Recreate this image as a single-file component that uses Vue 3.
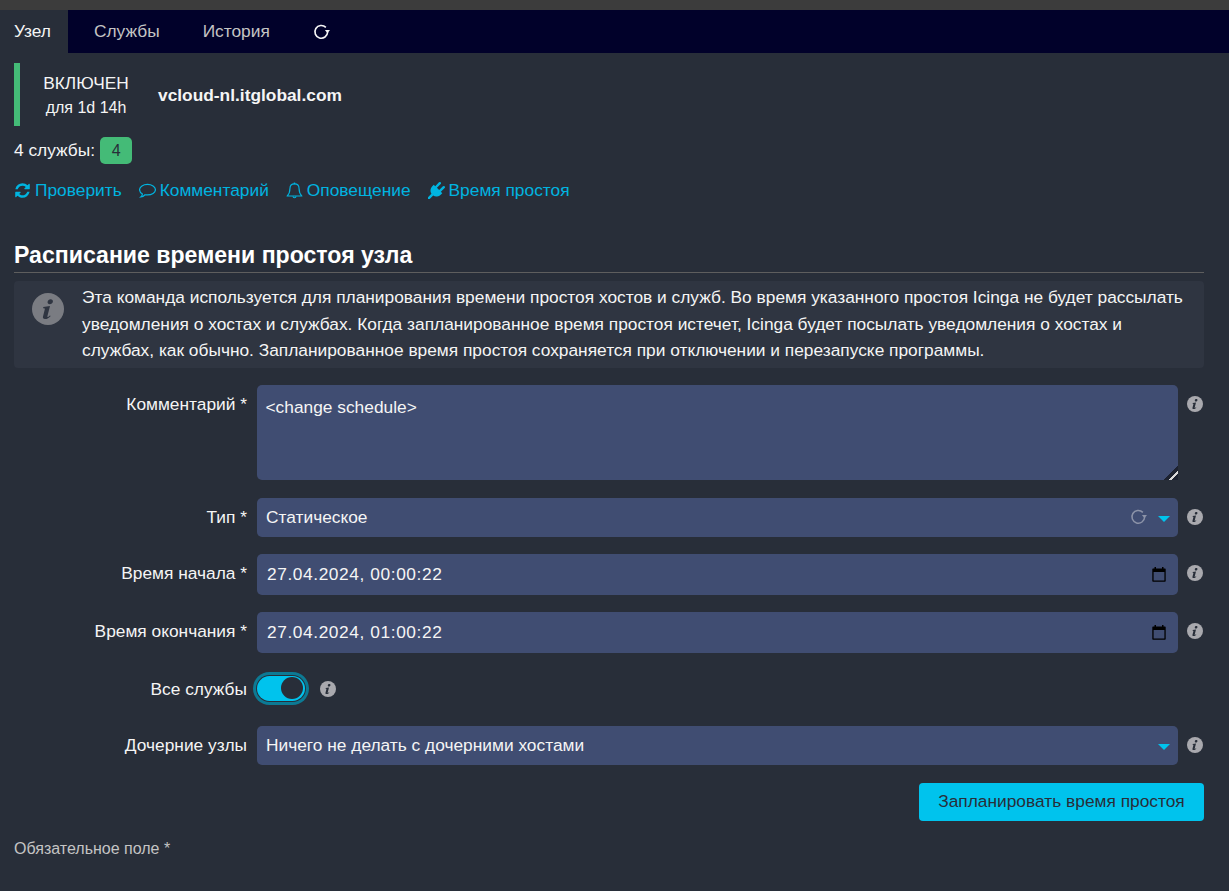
<template>
  <div class="page">
    <div class="top-strip"></div>
    <ul class="tabs">
      <li class="tab active">Узел</li>
      <li class="tab">Службы</li>
      <li class="tab">История</li>
      <li class="tab refresh">
        <svg width="17" height="17" viewBox="0 0 16 16" fill="none">
          <path :d="refreshArc" stroke="currentColor" stroke-width="1.5" />
          <path :d="refreshHead" fill="currentColor" />
        </svg>
      </li>
    </ul>

    <div class="content">
      <div class="host">
        <div class="state">
          <div class="state-name">ВКЛЮЧЕН</div>
          <div class="state-since">для 1d 14h</div>
        </div>
        <div class="host-name">vcloud-nl.itglobal.com</div>
      </div>

      <div class="services">
        <span>4 службы:</span>
        <span class="badge">4</span>
      </div>

      <div class="actions">
        <a v-for="action in actions" :key="action.label" class="action">
          <svg class="action-icon" viewBox="0 0 1792 1792" v-html="action.icon"></svg>
          {{ action.label }}
        </a>
      </div>

      <h2 class="title">Расписание времени простоя узла</h2>
      <div class="note">
        <svg class="note-icon" viewBox="0 0 32 32">
          <circle cx="16" cy="16" r="16" fill="currentColor" />
          <path :d="infoGlyph" fill="#2f3541" />
        </svg>
        <p>Эта команда используется для планирования времени простоя хостов и служб. Во время указанного простоя Icinga не будет рассылать уведомления о хостах и службах. Когда запланированное время простоя истечет, Icinga будет посылать уведомления о хостах и службах, как обычно. Запланированное время простоя сохраняется при отключении и перезапуске программы.</p>
      </div>

      <form class="form" @submit.prevent>
        <div class="row first">
          <label class="label">Комментарий *</label>
          <textarea class="control area" :value="'<change schedule>'"></textarea>
          <svg class="hint" viewBox="0 0 32 32"><circle cx="16" cy="16" r="16" fill="currentColor" /><path :d="infoGlyph" fill="#282e39" /></svg>
        </div>

        <div class="row">
          <label class="label">Тип *</label>
          <div class="field">
            <select class="control select"><option>Статическое</option></select>
            <svg class="select-refresh" width="17" height="17" viewBox="0 0 16 16" fill="none">
              <path :d="refreshArc" stroke="currentColor" stroke-width="1.4" />
              <path :d="refreshHead" fill="currentColor" />
            </svg>
            <span class="caret"></span>
          </div>
          <svg class="hint" viewBox="0 0 32 32"><circle cx="16" cy="16" r="16" fill="currentColor" /><path :d="infoGlyph" fill="#282e39" /></svg>
        </div>

        <div v-for="item in dates" :key="item.label" class="row">
          <label class="label">{{ item.label }}</label>
          <div class="field">
            <input class="control date" type="text" :value="item.value" />
            <svg class="calendar" width="16" height="16" viewBox="0 0 16 16">
              <path d="M3.5 1h1.5v1.5h6V1h1.5v1.5H14a.7.7 0 0 1 .7.7V15a.7.7 0 0 1-.7.7H2a.7.7 0 0 1-.7-.7V3.2a.7.7 0 0 1 .7-.7h1.5z M2.6 6v8.4h10.8V6z" fill="#000" fill-rule="evenodd" />
            </svg>
          </div>
          <svg class="hint" viewBox="0 0 32 32"><circle cx="16" cy="16" r="16" fill="currentColor" /><path :d="infoGlyph" fill="#282e39" /></svg>
        </div>

        <div class="row toggle-row">
          <label class="label">Все службы</label>
          <span class="toggle"><span class="knob"></span></span>
          <svg class="hint toggle-hint" viewBox="0 0 32 32"><circle cx="16" cy="16" r="16" fill="currentColor" /><path :d="infoGlyph" fill="#282e39" /></svg>
        </div>

        <div class="row last">
          <label class="label">Дочерние узлы</label>
          <div class="field">
            <select class="control select"><option>Ничего не делать с дочерними хостами</option></select>
            <span class="caret"></span>
          </div>
          <svg class="hint" viewBox="0 0 32 32"><circle cx="16" cy="16" r="16" fill="currentColor" /><path :d="infoGlyph" fill="#282e39" /></svg>
        </div>

        <div class="submit-row">
          <button class="submit" type="submit">Запланировать время простоя</button>
        </div>
      </form>

      <div class="required">Обязательное поле *</div>
    </div>
  </div>
</template>

<script setup>
const infoGlyph = 'M18.6 6.2c1.5 0 2.6 1 2.3 2.5-.3 1.4-1.6 2.5-3.1 2.5-1.5 0-2.5-1.1-2.2-2.5.3-1.5 1.5-2.5 3-2.5z M11.3 14l6.7-1-2.6 10.2c-.1.5 0 .7.3.7.6 0 1.5-.7 2.2-1.5l.8.6c-1.6 2-3.6 3.1-5.7 3.1-1.7 0-2.4-.9-2-2.5l1.8-7.3c.1-.6-.1-.9-.7-1l-1-.1z'
const refreshArc = 'M13.8 8.5a6 6 0 1 1-1.7-4.4'
const refreshHead = 'M16 6.6 H11.2 L13.6 9.6 Z'

const actions = [
  {
    label: 'Проверить',
    icon: '<path fill="currentColor" d="M1639 1056q0 5-1 7-64 268-268 434.5t-478 166.5q-146 0-282.5-55t-243.5-157l-129 129q-19 19-45 19t-45-19-19-45v-448q0-26 19-45t45-19h448q26 0 45 19t19 45-19 45l-137 137q71 66 161 102t187 36q134 0 250-65t186-179q11-17 53-117 8-23 30-23h192q13 0 22.5 9.5t9.5 22.5zm25-800v448q0 26-19 45t-45 19h-448q-26 0-45-19t-19-45 19-45l138-138q-148-137-349-137-134 0-250 65t-186 179q-11 17-53 117-8 23-30 23h-199q-13 0-22.5-9.5t-9.5-22.5v-7q65-268 270-434.5t480-166.5q146 0 284 55.5t245 156.5l130-129q19-19 45-19t45 19 19 45z"/>'
  },
  {
    label: 'Комментарий',
    icon: '<path fill="none" stroke="currentColor" stroke-width="125" d="M896 260c-450 0-836 250-836 560 0 180 120 340 300 440-15 130-80 240-170 320 180-25 340-130 450-240 80 15 160 20 256 20 450 0 836-240 836-540s-386-560-836-560z"/>'
  },
  {
    label: 'Оповещение',
    icon: '<path fill="none" stroke="currentColor" stroke-width="120" stroke-linejoin="round" d="M896 200c-300 0-480 220-480 480 0 430-110 610-300 800h1560c-190-190-300-370-300-800 0-260-180-480-480-480z"/><path fill="none" stroke="currentColor" stroke-width="110" d="M740 1500c0 100 70 170 156 170s156-70 156-170"/><path fill="currentColor" d="M896 50a85 85 0 1 1-1 0z"/>'
  },
  {
    label: 'Время простоя',
    icon: '<path fill="currentColor" d="M1755 453q37 38 37 90.5t-37 90.5l-401 400 150 150-160 160q-163 163-389.5 186.5t-411.5-100.5l-362 362h-181v-181l362-362q-124-185-100.5-411.5t186.5-389.5l160-160 150 150 400-401q38-37 91-37t90 37 37 90.5-37 90.5l-400 401 234 234 401-400q38-37 91-37t90 37z"/>'
  }
]

const dates = [
  { label: 'Время начала *', value: '27.04.2024, 00:00:22' },
  { label: 'Время окончания *', value: '27.04.2024, 01:00:22' }
]
</script>

<style>
html, body {
  margin: 0;
  background: #282e39;
}
</style>

<style scoped>
.page {
  min-height: 891px;
  background: #282e39;
  color: #f5f5f5;
  font-family: "Liberation Sans", Arial, sans-serif;
  font-size: 17.33px;
}

.top-strip {
  height: 10px;
  background: #3c3c3c;
}

.tabs {
  display: flex;
  height: 43px;
  margin: 0;
  padding: 0;
  list-style: none;
  background: #01012a;
}

.tab {
  display: flex;
  align-items: center;
  padding: 0 17px 0 26px;
  color: #c4c4c4;
}

.tab.active {
  padding: 0 17px 0 14px;
  background: #282e39;
  color: #f5f5f5;
}

.refresh {
  color: #f5f5f5;
}

.content {
  padding: 10px 25px 0 14px;
}

.host {
  display: flex;
  align-items: center;
  height: 63px;
}

.state {
  width: 120px;
  height: 63px;
  border-left: 6px solid #44bb77;
  box-sizing: border-box;
  display: flex;
  flex-direction: column;
  align-items: center;
  justify-content: center;
  gap: 6px;
  padding-left: 22px;
  padding-right: 4px;
  margin-right: 24px;
}

.state-name {
  line-height: 20px;
  white-space: nowrap;
}

.state-since {
  font-size: 16px;
  line-height: 18px;
  white-space: nowrap;
}

.host-name {
  padding-top: 2px;
  font-weight: bold;
}

.services {
  display: flex;
  align-items: center;
  gap: 5px;
  margin-top: 11px;
  height: 27px;
}

.badge {
  display: block;
  width: 32px;
  height: 27px;
  line-height: 27px;
  font-size: 16px;
  text-align: center;
  background: #44bb77;
  border-radius: 5px;
  color: #282e39;
}

.actions {
  display: flex;
  gap: 17px;
  margin-top: 15px;
  height: 22px;
  align-items: center;
}

.action {
  display: flex;
  align-items: center;
  gap: 4px;
  color: #00b4e0;
}

.action-icon {
  flex: none;
  width: 17px;
  height: 17px;
}

.title {
  margin: 39px 0 0;
  padding-bottom: 2px;
  border-bottom: 1px solid #5e5e5e;
  font-size: 23.1px;
  line-height: 30px;
  font-weight: bold;
  color: #fff;
}

.note {
  display: flex;
  gap: 18px;
  margin-top: 8px;
  padding: 3px 16px 4px 18px;
  background: #2f3541;
  border-radius: 4px;
}

.note-icon {
  flex: none;
  width: 32px;
  height: 32px;
  margin-top: 9px;
  color: #7a7c82;
}

.note p {
  margin: 0;
  line-height: 26.6px;
}

.form {
  margin-top: 17px;
}

.row {
  display: flex;
  align-items: flex-start;
  margin-bottom: 17px;
}

.row.first,
.row.last {
  margin-bottom: 18px;
}

.label {
  flex: none;
  width: 243px;
  padding-top: 10px;
  padding-right: 10px;
  box-sizing: border-box;
  text-align: right;
  line-height: 19px;
}

.field {
  position: relative;
  width: 921px;
}

.control {
  display: block;
  box-sizing: border-box;
  width: 100%;
  border: none;
  outline: none;
  padding: 0 9px;
  border-radius: 5px;
  background: #404d72;
  color: #f5f5f5;
  font: inherit;
}

.area {
  flex: none;
  width: 921px;
  height: 95px;
  padding: 13px 8.5px 0;
  line-height: 19px;
  resize: vertical;
}

.area::-webkit-resizer {
  background: linear-gradient(135deg, transparent 50%, #1d2230 50%, #1d2230 68%, #d8d8d8 68%, #d8d8d8 78%, #1d2230 78%);
}

.select {
  height: 39px;
  appearance: none;
}

.date {
  height: 41px;
  padding-left: 10px;
  letter-spacing: 0.58px;
}

.select-refresh {
  position: absolute;
  top: 10px;
  right: 31px;
  color: #8c93a8;
}

.caret {
  position: absolute;
  top: 18px;
  right: 8px;
  border-left: 6.5px solid transparent;
  border-right: 6.5px solid transparent;
  border-top: 6.5px solid #00c3ed;
}

.calendar {
  position: absolute;
  top: 12px;
  right: 11px;
}

.hint {
  flex: none;
  width: 16px;
  height: 16px;
  margin-top: 11px;
  margin-left: 9px;
  color: #a9a9ae;
}

.toggle-row {
  margin-top: 23px;
  margin-bottom: 25px;
  align-items: center;
}

.toggle-row .label {
  padding-top: 2px;
}

.toggle {
  display: block;
  position: relative;
  width: 48px;
  height: 25px;
  border-radius: 13px;
  background: #00c3ed;
  box-shadow: 0 0 0 1px #282e39, 0 0 0 4px #0c7a94;
}

.knob {
  position: absolute;
  top: 1.5px;
  right: 2px;
  width: 22px;
  height: 22px;
  border-radius: 50%;
  background: #282e39;
}

.toggle-hint {
  margin: 1px 0 0 15px;
}

.submit-row {
  display: flex;
  justify-content: flex-end;
}

.submit {
  width: 285px;
  height: 38px;
  border: none;
  border-radius: 4px;
  background: #00c3ed;
  color: #282e39;
  font: inherit;
}

.required {
  margin-top: 19px;
  font-size: 16px;
  color: #c4c4c4;
}
</style>
